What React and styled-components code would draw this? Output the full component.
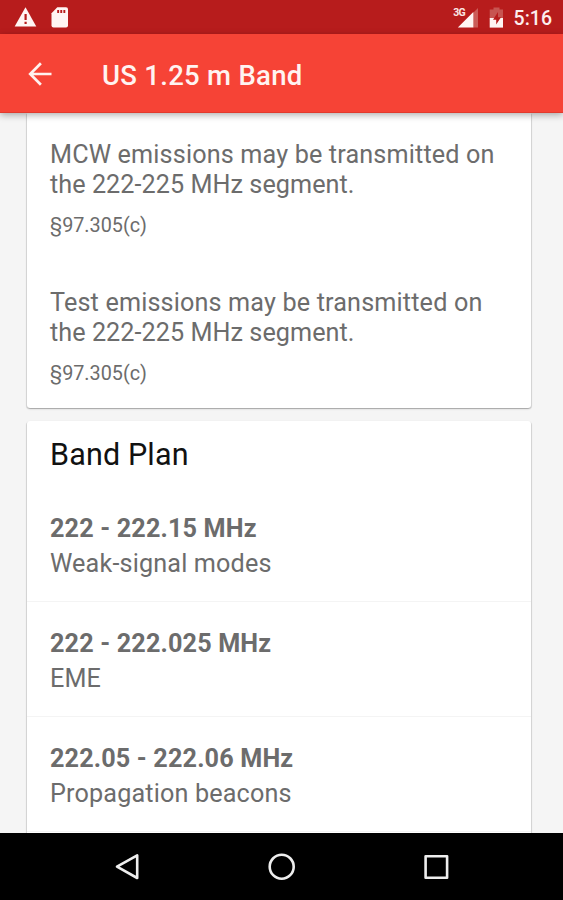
import React from "react";
import styled, { createGlobalStyle } from "styled-components";

const GlobalStyle = createGlobalStyle`
  * { box-sizing: border-box; }
  body { margin: 0; background: #f5f5f5; }
`;

const Screen = styled.div`
  display: flex;
  flex-direction: column;
  width: 563px;
  height: 900px;
  overflow: hidden;
  background: #f5f5f5;
  font-family: Roboto, sans-serif;
  color: #6c6c6c;
`;

const StatusBar = styled.div`
  display: flex;
  flex: none;
  align-items: center;
  justify-content: space-between;
  height: 34px;
  padding: 0 11px 0 14px;
  background: #b71c1c;
`;

const StatusGroup = styled.div`
  display: flex;
  align-items: center;
  height: 34px;
  gap: ${(p) => p.$gap}px;
  svg { display: block; }
`;

const Clock = styled.span`
  font-size: 19.5px;
  font-weight: 500;
  line-height: 34px;
  padding-top: 3px;
  color: #fdeeee;
`;

const AppBar = styled.header`
  display: flex;
  flex: none;
  align-items: center;
  height: 79px;
  padding-left: 26px;
  background: #f64336;
  border-bottom: 1px solid #e23a2d;
  box-shadow: 0 2px 7px rgba(0, 0, 0, 0.32);
  z-index: 1;
  svg { display: block; margin-top: 1px; }
`;

const Title = styled.h1`
  margin: 5px 0 0 48px;
  font-size: 27.5px;
  font-weight: 500;
  line-height: 32px;
  letter-spacing: 0.28px;
  white-space: nowrap;
  color: #fff3f1;
`;

const Content = styled.main`
  display: flex;
  flex: none;
  flex-direction: column;
  gap: 13px;
  height: 720px;
  padding: 0 32px 0 27px;
  overflow: hidden;
`;

const Card = styled.section`
  flex: none;
  width: 504px;
  height: ${(p) => p.$height}px;
  background: #fff;
  border-radius: ${(p) => (p.$scrolled ? "0 0 3px 3px" : "3px")};
  box-shadow: 0 1px 2px rgba(0, 0, 0, 0.22), 1px 1px 0 rgba(0, 0, 0, 0.08), -1px 1px 0 rgba(0, 0, 0, 0.08);
`;

const Rule = styled.article`
  height: 148px;
  padding: 27px 0 0 23px;
`;

const RuleText = styled.p`
  margin: 0;
  font-size: 25.2px;
  line-height: 30px;
  letter-spacing: ${(p) => (p.$wide ? 0.15 : 0.05)}px;
  white-space: nowrap;
`;

const Citation = styled.p`
  margin: 14px 0 0;
  font-size: 19.8px;
  line-height: 24px;
`;

const CardTitle = styled.h2`
  margin: 0;
  padding: 14px 0 0 23px;
  height: 66px;
  font-size: 30.5px;
  font-weight: 400;
  line-height: 40px;
  letter-spacing: 0.15px;
  color: #111;
`;

const Segment = styled.article`
  height: 115px;
  padding: 24px 0 0 23px;
  border-bottom: 1px solid #f4f4f4;
`;

const Frequency = styled.h3`
  margin: 0;
  font-size: 25.2px;
  font-weight: 700;
  line-height: 35px;
  letter-spacing: 0.15px;
  white-space: nowrap;
`;

const Usage = styled.p`
  margin: 0;
  font-size: 25.2px;
  line-height: 35px;
  letter-spacing: 0.15px;
`;

const NavBar = styled.nav`
  display: flex;
  flex: none;
  align-items: center;
  justify-content: space-between;
  height: 67px;
  padding: 0 114px;
  background: #000;
  svg { display: block; }
`;

const rules = [
  ["MCW emissions may be transmitted on", "the 222-225 MHz segment.", "§97.305(c)"],
  ["Test emissions may be transmitted on", "the 222-225 MHz segment.", "§97.305(c)"],
];

const segments = [
  ["222 - 222.15 MHz", "Weak-signal modes"],
  ["222 - 222.025 MHz", "EME"],
  ["222.05 - 222.06 MHz", "Propagation beacons"],
];

const SignalLabel = styled.text`
  font: 700 10.5px Roboto, sans-serif;
  letter-spacing: -0.7px;
  fill: #fbe6e4;
`;

const WarningIcon = () => (
  <svg width="23" height="34" viewBox="0 0 23 34">
    <path d="M11.5 7.2 22.3 26.6H.7Z" fill="#fff5f3" />
    <path d="M10.5 14h2.2v6h-2.2zM10.5 21.7h2.2v2.2h-2.2z" fill="#b71c1c" />
  </svg>
);

const SdCardIcon = () => (
  <svg width="18" height="34" viewBox="0 0 18 34">
    <path d="M6.3 7.3H15a2 2 0 0 1 2 2V25.5a2 2 0 0 1-2 2H2.5a2 2 0 0 1-2-2V13.2Z" fill="#fff5f3" />
    <path d="M6.2 10h1.9v3H6.2zM9.3 10h1.9v3H9.3zM12.4 10h1.9v3h-1.9z" fill="#b71c1c" />
  </svg>
);

const SignalIcon = () => (
  <svg width="26" height="34" viewBox="0 0 26 34">
    <path d="M25 8V27.5H20V13Z" fill="#cb5c58" />
    <path d="M20.3 12V27.5H4.8Z" fill="#fff5f3" />
    <SignalLabel x="0.3" y="16">3G</SignalLabel>
  </svg>
);

const BatteryIcon = () => (
  <svg width="15" height="34" viewBox="0 0 15 34">
    <path d="M4.5 7.5h6v2H14v9H.7v-9h3.8z" fill="#c75551" />
    <path d="M.7 18H14v9.6H.7z" fill="#fff5f3" />
    <path d="M9 12 4 19.7h3.2v4.8l4.8-7.2H9Z" fill="#b71c1c" />
  </svg>
);

const BackArrow = () => (
  <svg width="28" height="28" viewBox="0 0 28 28" fill="none" stroke="#fff1ef" strokeWidth="2.7">
    <path d="M14.9 3.2 4.2 14l10.7 10.8M4.5 14H25.5" />
  </svg>
);

export default function App() {
  return (
    <Screen>
      <GlobalStyle />
      <StatusBar>
        <StatusGroup $gap={14}>
          <WarningIcon />
          <SdCardIcon />
        </StatusGroup>
        <StatusGroup $gap={10}>
          <SignalIcon />
          <BatteryIcon />
          <Clock>5:16</Clock>
        </StatusGroup>
      </StatusBar>
      <AppBar>
        <BackArrow />
        <Title>US 1.25 m Band</Title>
      </AppBar>
      <Content>
        <Card $height={295} $scrolled>
          {rules.map(([first, second, cite]) => (
            <Rule key={first}>
              <RuleText $wide>{first}</RuleText>
              <RuleText>{second}</RuleText>
              <Citation>{cite}</Citation>
            </Rule>
          ))}
        </Card>
        <Card $height={450}>
          <CardTitle>Band Plan</CardTitle>
          {segments.map(([range, usage]) => (
            <Segment key={range}>
              <Frequency>{range}</Frequency>
              <Usage>{usage}</Usage>
            </Segment>
          ))}
        </Card>
      </Content>
      <NavBar>
        <svg width="26" height="30" viewBox="0 0 26 30" fill="none" stroke="#eee" strokeWidth="2.6" strokeLinejoin="round">
          <path d="M23.2 3.4V26L3 14.7Z" />
        </svg>
        <svg width="28" height="30" viewBox="0 0 28 30" fill="none" stroke="#eee" strokeWidth="2.6">
          <circle cx="13.7" cy="14.7" r="12" />
        </svg>
        <svg width="26" height="30" viewBox="0 0 26 30" fill="none" stroke="#eee" strokeWidth="2.6" strokeLinejoin="round">
          <rect x="2.6" y="4.2" width="21.5" height="21.5" />
        </svg>
      </NavBar>
    </Screen>
  );
}
